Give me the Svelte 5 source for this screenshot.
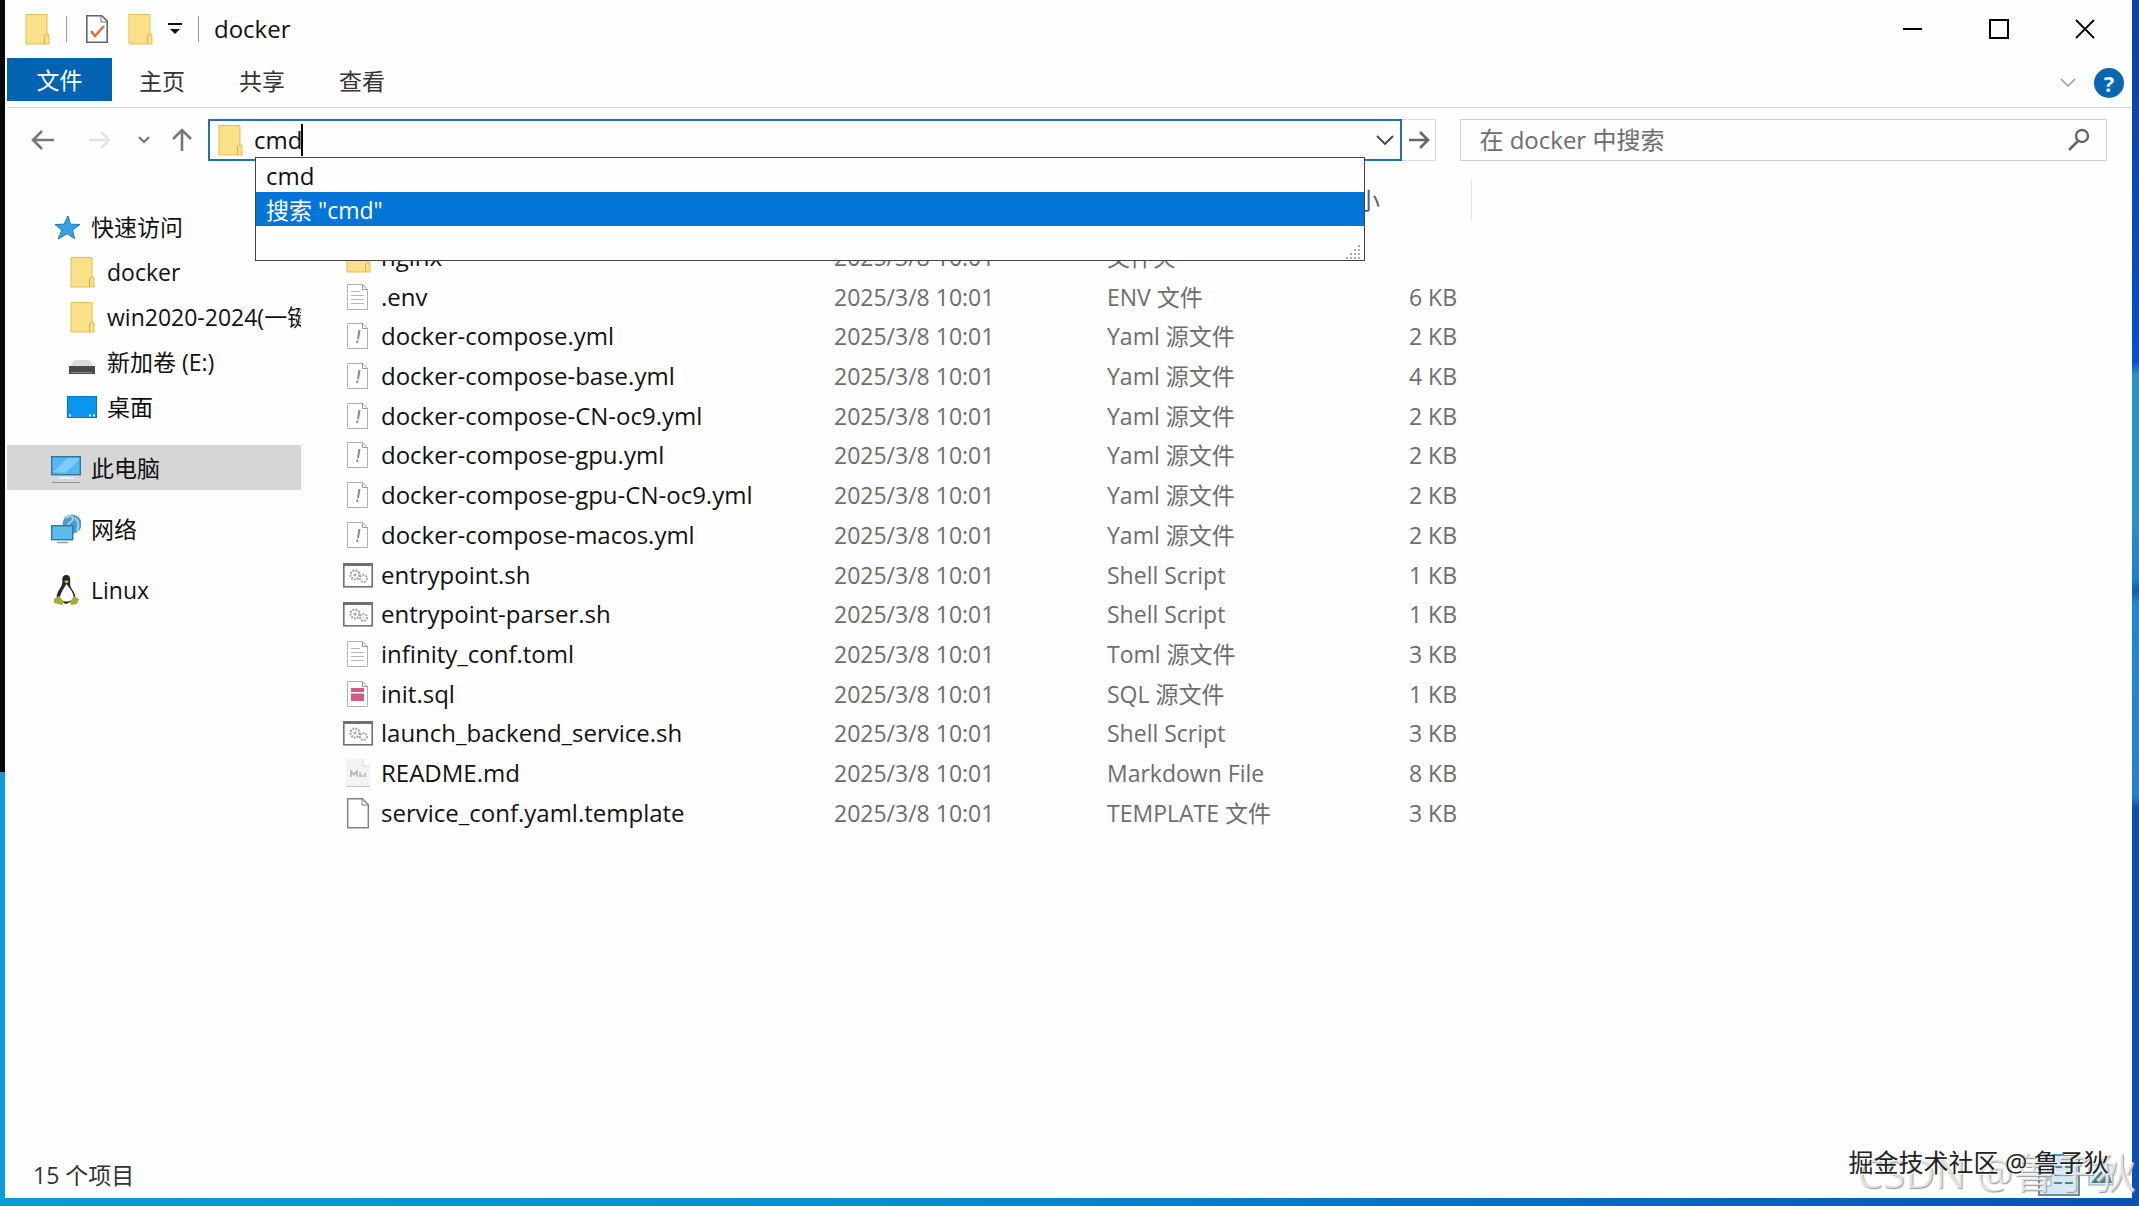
<script>
  let path = $state('cmd');
  let query = $state('');

  const tabs = ['文件', '主页', '共享', '查看'];

  const sidebar = [
    [
      { name: '快速访问', icon: 'star' },
      { name: 'docker', icon: 'folder', child: true },
      { name: 'win2020-2024(一键', icon: 'folder', child: true },
      { name: '新加卷 (E:)', icon: 'drive', child: true },
      { name: '桌面', icon: 'desktop', child: true }
    ],
    [{ name: '此电脑', icon: 'pc', selected: true }],
    [{ name: '网络', icon: 'network' }],
    [{ name: 'Linux', icon: 'linux' }]
  ];

  const date = '2025/3/8 10:01';

  const files = [
    { name: 'nginx', icon: 'folder', type: '文件夹', size: '' },
    { name: '.env', icon: 'text', type: 'ENV 文件', size: '6 KB' },
    { name: 'docker-compose.yml', icon: 'yaml', type: 'Yaml 源文件', size: '2 KB' },
    { name: 'docker-compose-base.yml', icon: 'yaml', type: 'Yaml 源文件', size: '4 KB' },
    { name: 'docker-compose-CN-oc9.yml', icon: 'yaml', type: 'Yaml 源文件', size: '2 KB' },
    { name: 'docker-compose-gpu.yml', icon: 'yaml', type: 'Yaml 源文件', size: '2 KB' },
    { name: 'docker-compose-gpu-CN-oc9.yml', icon: 'yaml', type: 'Yaml 源文件', size: '2 KB' },
    { name: 'docker-compose-macos.yml', icon: 'yaml', type: 'Yaml 源文件', size: '2 KB' },
    { name: 'entrypoint.sh', icon: 'shell', type: 'Shell Script', size: '1 KB' },
    { name: 'entrypoint-parser.sh', icon: 'shell', type: 'Shell Script', size: '1 KB' },
    { name: 'infinity_conf.toml', icon: 'text', type: 'Toml 源文件', size: '3 KB' },
    { name: 'init.sql', icon: 'sql', type: 'SQL 源文件', size: '1 KB' },
    { name: 'launch_backend_service.sh', icon: 'shell', type: 'Shell Script', size: '3 KB' },
    { name: 'README.md', icon: 'markdown', type: 'Markdown File', size: '8 KB' },
    { name: 'service_conf.yaml.template', icon: 'blank', type: 'TEMPLATE 文件', size: '3 KB' }
  ];
</script>

{#snippet icon(kind)}
  <svg class="icon" viewBox="0 0 30 32" aria-hidden="true">
    {#if kind === 'folder'}
      <path d="M4 1.5h21v20h2V31H4z" fill="#fbe08a" stroke="#e3bd56" />
      <path d="M22.5 30.500V23l2.500-2.500" fill="none" stroke="#d9ad43" />
    {:else if kind === 'star'}
      <path d="M17 5l2.500 8.200 9.500.3-7.500 5.500 2 8.500L16 22.700l-8.700 5.300 3.500-9L4 13.500l9-.3z" fill="#3aa0e4" stroke="#1f79b9" />
    {:else if kind === 'drive'}
      <path d="M7 14h16l4 7H3z" fill="#dcdcdc" />
      <rect x="2" y="20" width="26" height="8" fill="#4a4a4a" />
      <path d="M4 26.500h21" stroke="#8b8b8b" />
    {:else if kind === 'desktop'}
      <rect x="0.500" y="5.500" width="29" height="21" fill="#0a95ef" stroke="#0573bf" />
      <path d="M2 24.500h2M22 24.500h2M26 24.500h2" stroke="#fff" stroke-width="2" />
    {:else if kind === 'pc'}
      <rect x="0.700" y="4.700" width="28.600" height="18" fill="#52b8f4" stroke="#3b7396" stroke-width="1.400" />
      <path d="M2 20L17 6h11v2L14 21z" fill="#7ccbfa" />
      <path d="M8 26h15" stroke="#dff3ff" stroke-width="2" />
      <path d="M1 30.500h28" stroke="#8d9296" />
    {:else if kind === 'network'}
      <circle cx="21" cy="11" r="9.500" fill="#4e9ccb" />
      <path d="M15 5c4-3 7-2 7 1s-5 3-5 6M24 5c4 3 4 9 2 13" stroke="#9fd2ea" stroke-width="2" fill="none" />
      <rect x="0.700" y="12.700" width="21" height="14" fill="#5bbdec" stroke="#2f789f" stroke-width="1.400" />
      <path d="M6 29.500h11" stroke="#86a0ae" stroke-width="1.500" />
    {:else if kind === 'linux'}
      <path d="M15.500 1c-3 0-4.500 2-4.200 5 .4 5-1 6-3.300 10-2 3.500-3 7-2 10l9 4 9-4c1-4-.5-7-2.500-10-2.500-4-2.500-5-2.300-10C19.300 3 18 1 15.500 1z" fill="#262626" />
      <path d="M15.500 10c-2 3-6 9-6.500 13 0 6 13 6 13.500 0 0-5-5-10-7-13z" fill="#fff" />
      <path d="M13 7.500l2.500-1.500L18 7.500l-2.500 2z" fill="#d4b12f" />
      <path d="M3 25l5-3 5 6-2 3-8-2zM28 25l-5-3-4 6 1 3 6-1z" fill="#a9ab35" />
    {:else if kind === 'shell'}
      <rect x="0.800" y="4.800" width="28.400" height="23" fill="#fff" stroke="#707070" stroke-width="1.600" />
      <path d="M0 5.500h30" stroke="#707070" stroke-width="3" />
      <circle cx="12" cy="16" r="4.500" fill="none" stroke="#a0a0a0" stroke-width="2" stroke-dasharray="2 1" />
      <circle cx="12" cy="16" r="1.500" fill="#a4a4a4" />
      <circle cx="20.500" cy="19.500" r="3.500" fill="none" stroke="#aaa" stroke-width="2" stroke-dasharray="2 1" />
    {:else if kind === 'markdown'}
      <path d="M3 2h17l7 7v20H3z" fill="#f3f3f3" />
      <path d="M20 2v7h7" fill="#fff" stroke="#ddd" />
      <path d="M3 29.500h24" stroke="#c8c8c8" />
      <path d="M8 20v-6l3 4 3-4v6M17 15v4h3M22 16v4" fill="none" stroke="#b4b4b4" stroke-width="1.500" />
    {:else if kind === 'blank'}
      <path d="M4.700 1.700h14.600l6 6v23H4.700z" fill="#fff" stroke="#808080" stroke-width="1.400" />
      <path d="M19 2v6h6" fill="none" stroke="#808080" />
    {:else}
      <path d="M4.500 3.500h15l5 5v20h-20z" fill="#fff" stroke="#b0b0b0" />
      <path d="M19.500 3.500v5h5" fill="none" stroke="#999" />
      {#if kind === 'text'}
        <path d="M8 10.500h9M8 14.500h13M8 18.500h13M8 22.500h13" stroke="#b5b5b5" />
      {:else if kind === 'yaml'}
        <path d="M16.500 10l-1.500 9M14.500 20.500l-.3 2.500" stroke="#8c8c8c" stroke-width="2" />
      {:else if kind === 'sql'}
        <path d="M8 10h13v4H8zM8 15.500h13V23H8z" fill="#cf5d83" />
      {/if}
    {/if}
  </svg>
{/snippet}

<div class="desktop">
  <div class="window">
    <header class="titlebar">
      {@render icon('folder')}
      <span class="divider"></span>
      <button class="quick" aria-label="属性">
        <svg class="icon" viewBox="0 0 30 32">
          <path d="M4.800 2.800h15l5.400 5.400v21H4.800z" fill="#fff" stroke="#666" stroke-width="1.600" />
          <path d="M19 3v6h6" fill="none" stroke="#777" />
          <path d="M9 18l4 5 9-10" fill="none" stroke="#d5733f" stroke-width="2.600" />
        </svg>
      </button>
      <button class="quick" aria-label="新建文件夹">{@render icon('folder')}</button>
      <button class="customize" aria-label="自定义快速访问工具栏">
        <svg width="14" height="14" viewBox="0 0 14 14">
          <path d="M0 2h14" stroke="#111" stroke-width="2" />
          <path d="M2 7h10l-5 5z" fill="#111" />
        </svg>
      </button>
      <span class="divider"></span>
      <h1>docker</h1>
      <div class="controls">
        <button aria-label="最小化">
          <svg width="20" height="20" viewBox="0 0 20 20"><path d="M0 10h19" stroke="#000" stroke-width="2" /></svg>
        </button>
        <button aria-label="最大化">
          <svg width="20" height="20" viewBox="0 0 20 20"><rect x="1" y="1" width="18" height="18" fill="none" stroke="#000" stroke-width="2" /></svg>
        </button>
        <button aria-label="关闭">
          <svg width="20" height="20" viewBox="0 0 20 20"><path d="M1 1l18 18M19 1L1 19" stroke="#000" stroke-width="1.800" /></svg>
        </button>
      </div>
    </header>

    <nav class="ribbon">
      {#each tabs as tab, i}
        <button class="tab" class:file={i === 0}>{tab}</button>
      {/each}
      <button class="expand" aria-label="展开功能区">
        <svg width="16" height="12" viewBox="0 0 16 12"><path d="M1 2l7 7 7-7" fill="none" stroke="#999" stroke-width="1.500" /></svg>
      </button>
      <button class="help" aria-label="帮助">?</button>
    </nav>

    <div class="toolbar">
      <div class="history">
        <button aria-label="后退">
          <svg width="24" height="22" viewBox="0 0 24 22"><path d="M23 11H2M11 2l-9 9 9 9" fill="none" stroke="#777" stroke-width="2.600" /></svg>
        </button>
        <button aria-label="前进">
          <svg width="24" height="22" viewBox="0 0 24 22"><path d="M1 11h20M13 3l8 8-8 8" fill="none" stroke="#e2e2e2" stroke-width="2.400" /></svg>
        </button>
        <button class="recent" aria-label="最近浏览的位置">
          <svg width="12" height="10" viewBox="0 0 12 10"><path d="M1 2l5 5 5-5" fill="none" stroke="#777" stroke-width="2.200" /></svg>
        </button>
        <button aria-label="上移">
          <svg width="22" height="24" viewBox="0 0 22 24"><path d="M11 23V2M2 11l9-9 9 9" fill="none" stroke="#777" stroke-width="2.600" /></svg>
        </button>
      </div>

      <div class="location">
        <div class="address">
          {@render icon('folder')}
          <input class="path" aria-label="地址" bind:value={path} />
          <span class="caret"></span>
          <button class="open" aria-label="以前的位置">
            <svg width="18" height="12" viewBox="0 0 18 12"><path d="M1 2l8 8 8-8" fill="none" stroke="#444" stroke-width="1.800" /></svg>
          </button>
          <ul class="suggestions">
            <li>cmd</li>
            <li class="active">搜索 "cmd"</li>
            <li class="grip">
              <svg width="16" height="16" viewBox="0 0 16 16">
                <path d="M12 2h2M12 6h2M8 6h2M12 10h2M8 10h2M4 10h2M0 14h2M4 14h2M8 14h2M12 14h2" stroke="#aaa" stroke-width="2" />
              </svg>
            </li>
          </ul>
        </div>
        <button class="go" aria-label="转到">
          <svg width="22" height="20" viewBox="0 0 22 20"><path d="M1 10h19M12 2l8 8-8 8" fill="none" stroke="#666" stroke-width="2.600" /></svg>
        </button>
      </div>

      <div class="search">
        <input aria-label="搜索" placeholder="在 docker 中搜索" bind:value={query} />
        <svg width="22" height="24" viewBox="0 0 22 24">
          <circle cx="14" cy="8" r="6" fill="none" stroke="#666" stroke-width="2.400" />
          <path d="M10 13l-9 9" stroke="#666" stroke-width="2.600" />
        </svg>
      </div>
    </div>

    <main>
      <aside>
        {#each sidebar as group}
          <ul class="group">
            {#each group as item}
              <li class:child={item.child} class:selected={item.selected}>
                {@render icon(item.icon)}
                <span>{item.name}</span>
              </li>
            {/each}
          </ul>
        {/each}
      </aside>

      <table>
        <colgroup>
          <col class="col-name" />
          <col class="col-date" />
          <col class="col-type" />
          <col class="col-size" />
        </colgroup>
        <thead>
          <tr>
            <th>名称</th>
            <th>修改日期</th>
            <th>类型</th>
            <th><span class="edge">大小</span></th>
          </tr>
        </thead>
        <tbody>
          {#each files as file}
            <tr>
              <td class="name"><div>{@render icon(file.icon)}{file.name}</div></td>
              <td>{date}</td>
              <td>{file.type}</td>
              <td class="size">{file.size}</td>
            </tr>
          {/each}
        </tbody>
      </table>
    </main>

    <footer>
      <span>15 个项目</span>
      <div class="views">
        <button class="details" aria-label="详细信息">
          <svg width="32" height="28" viewBox="0 0 32 28">
            <path d="M2 3h6v6H2zM2 11h6v6H2zM2 19h6v6H2z" fill="#fff" stroke="#86a3b8" />
            <path d="M11 6h8M22 6h8M11 14h8M22 14h8M11 22h8M22 22h8" stroke="#5c7f97" stroke-width="2" />
          </svg>
        </button>
        <button class="thumbs" aria-label="大图标">
          <svg width="26" height="22" viewBox="0 0 26 22">
            <rect x="1" y="1" width="24" height="20" fill="#d7edf5" stroke="#8ba5b0" />
            <path d="M3 19l10-12 5 6 3-3 3 9z" fill="#4d7b84" />
          </svg>
        </button>
      </div>
    </footer>
  </div>

  <span class="mark csdn">CSDN @鲁子狄</span>
  <span class="mark juejin">掘金技术社区 @ 鲁子狄</span>
</div>

<style>
  :global(body) {
    margin: 0;
  }

  .desktop {
    position: relative;
    display: flex;
    box-sizing: border-box;
    min-height: 100vh;
    padding: 0 7px 8px 5px;
    overflow: hidden;
    font-family: 'Open Sans', 'Noto Sans CJK SC', sans-serif;
    font-size: 24px;
    line-height: 32px;
    color: #111;
    background:
      linear-gradient(#0b0505 64%, #0a9bd3 64%) left top / 5px 100% no-repeat,
      linear-gradient(#0b41a8, #0450cf 30%, #2394c4 31%, #2394c4 43%, #1a80cf 48%, #0d5cb0 49%, #1a8ad6 50%, #2380cf 66%, #0a50ae 67%, #0a50b5) right top / 7px 100% no-repeat,
      linear-gradient(90deg, #0a9bd3, #078fcf 40%, #0a50b5);
  }

  .window {
    flex: 1;
    display: flex;
    flex-direction: column;
    min-width: 0;
    padding-left: 2px;
    background: #fefefe;
  }

  button {
    display: flex;
    align-items: center;
    justify-content: center;
    padding: 0;
    border: none;
    background: none;
    font: inherit;
    color: inherit;
  }

  ul {
    list-style: none;
    margin: 0;
    padding: 0;
  }

  .icon {
    flex: none;
    width: 30px;
    height: 32px;
  }

  /* title bar */
  .titlebar {
    display: flex;
    align-items: center;
    height: 58px;
    padding: 0 4px 0 15px;
  }

  .divider {
    width: 1px;
    height: 26px;
    margin: 0 15px 0 14px;
    background: #999;
  }

  .quick {
    margin-right: 13px;
  }

  .customize {
    margin-right: 2px;
  }

  h1 {
    margin: 0;
    font-size: 24px;
    font-weight: 400;
  }

  .controls {
    display: flex;
    margin-left: auto;
  }

  .controls button {
    width: 86px;
    height: 56px;
  }

  /* ribbon tabs */
  .ribbon {
    display: flex;
    height: 49px;
    padding-right: 8px;
    border-bottom: 1px solid #d9dcde;
  }

  .tab {
    width: 100px;
    height: 46px;
    font-size: 23px;
    color: #333;
  }

  .tab.file {
    width: 105px;
    height: 43px;
    background: #0263b1;
    color: #fff;
  }

  .expand {
    margin: 0 18px 0 auto;
  }

  .help {
    align-self: center;
    width: 30px;
    height: 30px;
    border-radius: 50%;
    background: #0a66b0;
    font-size: 22px;
    font-weight: 700;
    color: #e6f4ff;
  }

  /* navigation row */
  .toolbar {
    display: grid;
    grid-template-columns: 177px 19fr 10fr;
    column-gap: 24px;
    padding: 11px 25px 19px 0;
  }

  .history {
    display: flex;
    align-items: center;
    gap: 33px;
    padding-left: 24px;
  }

  .history .recent {
    margin: 0 -12px 0 -7px;
  }

  .location {
    display: flex;
    min-width: 0;
  }

  .address {
    position: relative;
    flex: 1;
    display: flex;
    align-items: center;
    box-sizing: border-box;
    height: 42px;
    padding: 0 6px 0 5px;
    border: 2px solid #2471a8;
  }

  .path {
    width: 47px;
    margin-left: 9px;
    padding: 0;
    border: none;
    outline: none;
    background: none;
    font: inherit;
    color: inherit;
  }

  .caret {
    width: 2px;
    height: 32px;
    background: #000;
  }

  .open {
    margin-left: auto;
  }

  .suggestions {
    position: absolute;
    z-index: 1;
    top: 36px;
    left: 45px;
    right: 35px;
    border: 1px solid #444;
    background: #fefefe;
  }

  .suggestions li {
    height: 34px;
    padding-left: 10px;
    line-height: 36px;
  }

  .suggestions .active {
    background: #0474d6;
    font-size: 23px;
    color: #fff;
  }

  .suggestions .grip {
    display: flex;
    align-items: flex-end;
    justify-content: flex-end;
    padding-right: 2px;
  }

  .go {
    box-sizing: border-box;
    width: 34px;
    height: 42px;
    border: 1px solid #dadada;
    border-left: none;
  }

  .search {
    display: flex;
    align-items: center;
    box-sizing: border-box;
    height: 42px;
    padding: 0 16px 0 18px;
    border: 1px solid #d0d0d0;
  }

  .search input {
    flex: 1;
    min-width: 0;
    padding: 0;
    border: none;
    outline: none;
    background: none;
    font: inherit;
  }

  .search input::placeholder {
    color: #6d6d6d;
  }

  /* folder tree and file list */
  main {
    flex: 1;
    display: flex;
    align-items: flex-start;
  }

  aside {
    flex: none;
    width: 294px;
    padding-top: 24px;
  }

  .group {
    margin-bottom: 16px;
  }

  .group li {
    display: flex;
    align-items: center;
    gap: 10px;
    height: 45px;
    padding-left: 44px;
    overflow: hidden;
    white-space: nowrap;
    font-size: 23px;
  }

  .group .child {
    padding-left: 60px;
  }

  .group .selected {
    background: #d6d6d6;
  }

  table {
    width: 1129px;
    height: 653px;
    margin-left: 42px;
    border-collapse: collapse;
    table-layout: fixed;
    white-space: nowrap;
  }

  .col-name {
    width: 491px;
  }

  .col-date {
    width: 273px;
  }

  .col-type {
    width: 227px;
  }

  th {
    height: 57px;
    padding: 0;
    vertical-align: top;
    text-align: left;
    font-size: 23px;
    font-weight: 400;
    line-height: 40px;
    color: #4c607a;
  }

  .edge {
    display: block;
    border-right: 1px solid #e2e2e2;
  }

  td {
    padding: 0;
    font-size: 23px;
    color: #6d6d6d;
  }

  .name {
    font-size: 24px;
    color: #111;
  }

  .name div {
    display: flex;
    align-items: center;
    gap: 8px;
  }

  .size {
    padding-right: 15px;
    text-align: right;
  }

  /* status bar */
  footer {
    display: flex;
    align-items: center;
    justify-content: space-between;
    height: 46px;
    padding: 0 18px 0 26px;
    font-size: 23px;
    color: #333;
  }

  .views {
    display: flex;
    gap: 8px;
  }

  .details {
    width: 42px;
    height: 42px;
    border: 2px solid #5b93b5;
    background: #d3eaf6;
  }

  .mark {
    position: absolute;
    z-index: 2;
    white-space: nowrap;
  }

  .csdn {
    right: 3px;
    bottom: 18px;
    font-size: 41px;
    color: rgba(255, 255, 255, 0.7);
    text-shadow: 1px 1px 1px #999;
  }

  .juejin {
    right: 30px;
    bottom: 28px;
    font-size: 25px;
    color: #222;
    text-shadow: 1px 1px 0 #fff;
  }
</style>
